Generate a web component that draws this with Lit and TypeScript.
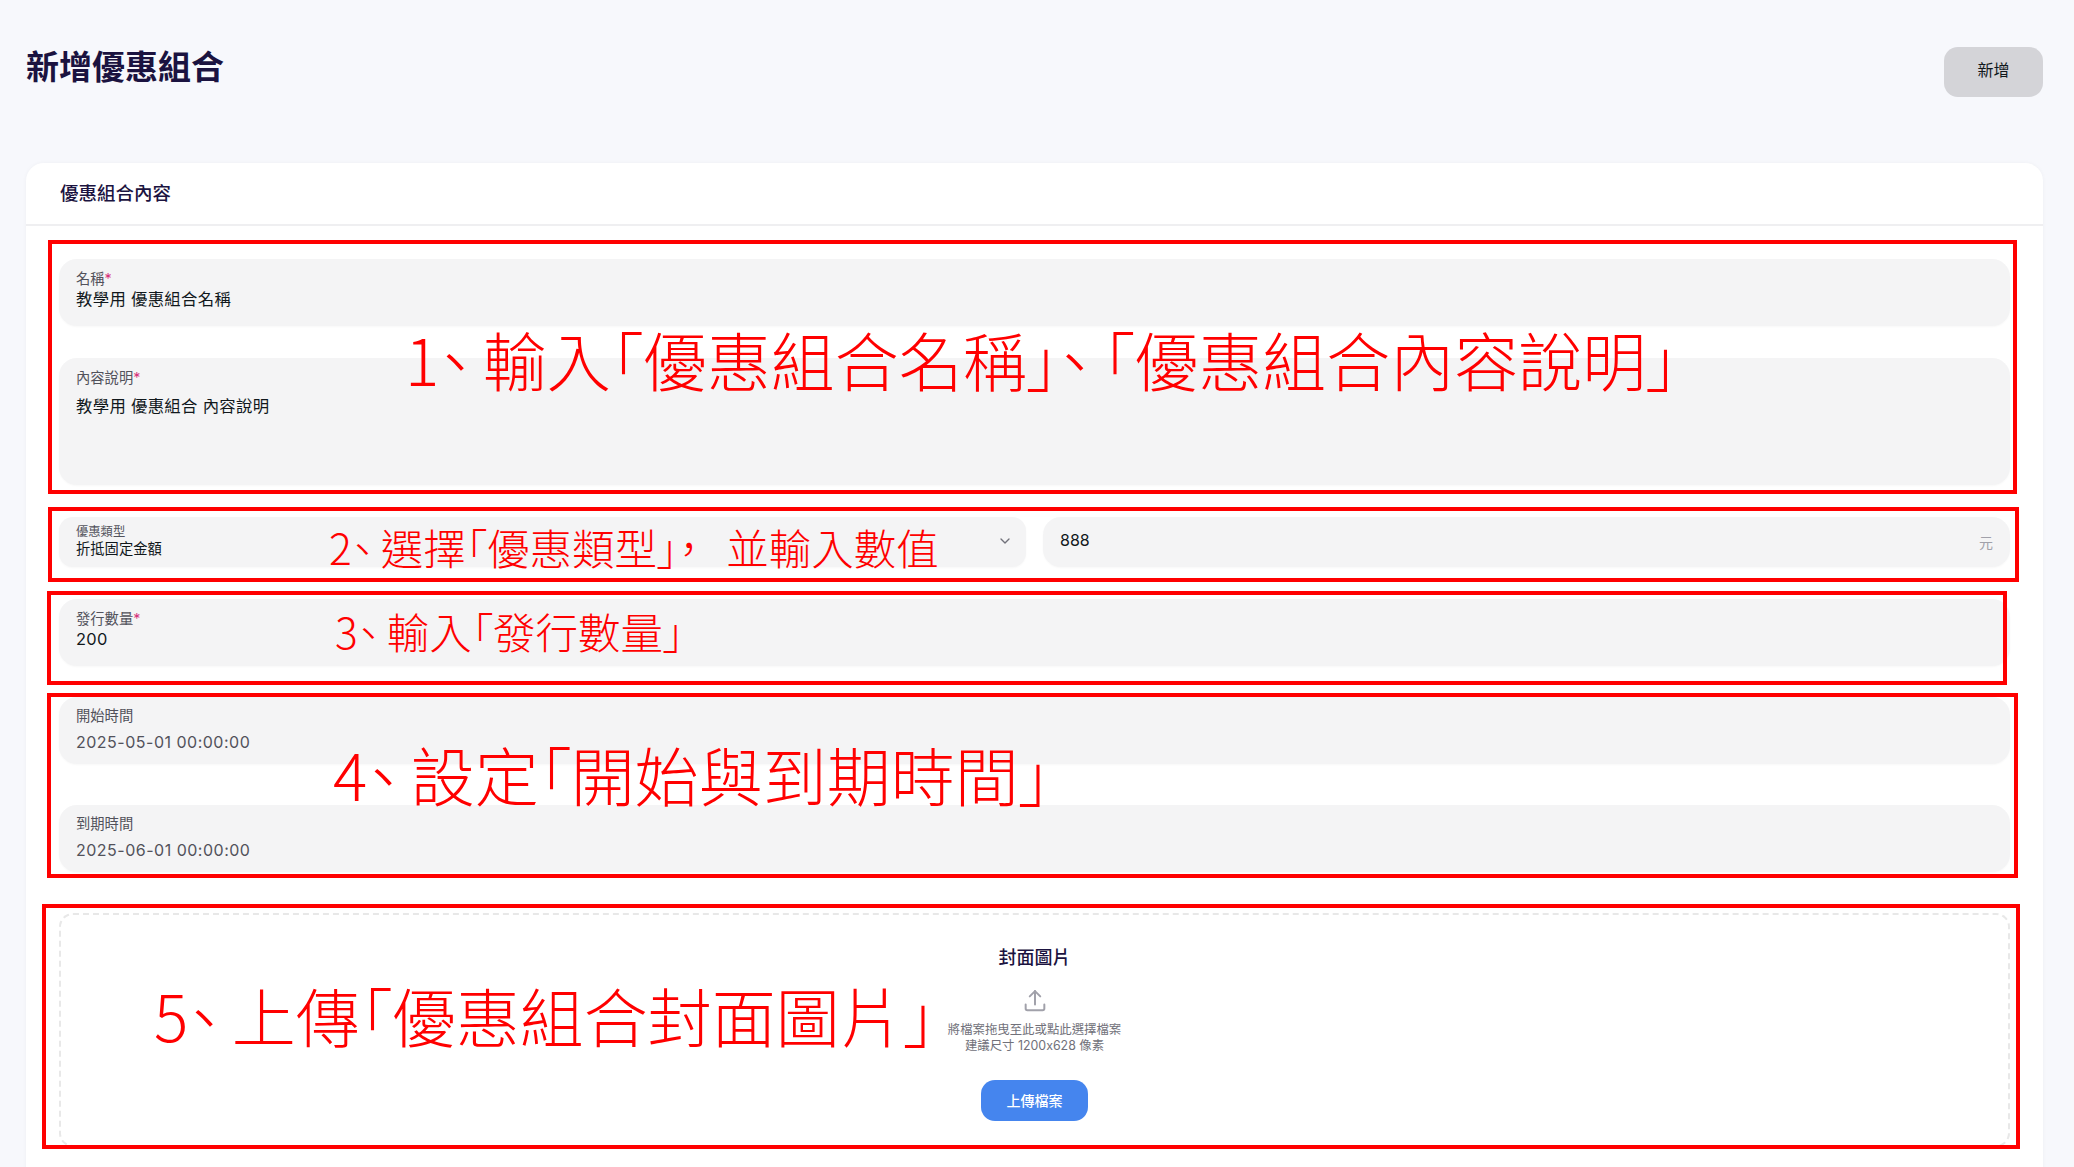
import { LitElement, html, css } from 'lit'
import { customElement } from 'lit/decorators.js'

const chevron = html`<svg class="chevron" width="16" height="16" viewBox="0 0 24 24" fill="none" stroke="currentColor" stroke-width="2" stroke-linecap="round" stroke-linejoin="round"><path d="M6 9l6 6 6-6"/></svg>`
const uploadIcon = html`<svg class="upload-icon" width="28" height="28" viewBox="0 0 24 24" fill="none" stroke="currentColor" stroke-width="1.7" stroke-linecap="round" stroke-linejoin="round"><path d="M4 15v3.5A1.5 1.5 0 0 0 5.5 20h13a1.5 1.5 0 0 0 1.500-1.500V15"/><path d="M12 15V3.500"/><path d="M7.500 8L12 3.500 16.500 8"/></svg>`
const dun = html`<span class="dun">、</span>`

@customElement('app-root')
export class AppRoot extends LitElement {
  static styles = css`
    :host {
      display: block;
      position: relative;
      height: 1167px;
      overflow: hidden;
      background: #f7f8fc;
      font-family: Inter, "Noto Sans CJK TC", sans-serif;
      color: #11181c;
    }
    .page {
      padding: 47px 31px 0 26px;
    }
    .top {
      display: flex;
      justify-content: space-between;
      align-items: flex-start;
      height: 116px;
    }
    h1 {
      margin: 0;
      font-size: 33px;
      line-height: 40px;
      font-weight: 700;
      color: #1b1340;
    }
    .add {
      width: 99px;
      height: 50px;
      padding: 0 0 6px;
      border: none;
      border-radius: 14px;
      background: #d4d4d8;
      color: #11181c;
      font: inherit;
      font-size: 16px;
      font-weight: 400;
    }
    .card {
      height: 1100px;
      border-radius: 18px 18px 0 0;
      background: #fff;
      box-shadow: 0 0 4px rgba(0, 0, 0, 0.04);
    }
    .card-head {
      height: 63px;
      box-sizing: border-box;
      padding: 17px 34px 0;
      border-bottom: 2px solid #efeff1;
      font-size: 18.5px;
      line-height: 26px;
      font-weight: 500;
      color: #1b1340;
    }
    .form {
      padding: 33px 33px 0;
      display: flex;
      flex-direction: column;
    }
    .field {
      box-sizing: border-box;
      height: 67px;
      padding: 10px 17px 0;
      border-radius: 18px;
      background: #f4f4f5;
      box-shadow: 0 1px 2px rgba(0, 0, 0, 0.03);
      flex: none;
    }
    .gap32 { margin-top: 32px; }
    .gap31 { margin-top: 31px; }
    .gap41 { margin-top: 41px; }
    .label {
      display: block;
      font-size: 14.3px;
      line-height: 20px;
      color: #52525b;
    }
    .label i {
      color: #d6337c;
      font-style: normal;
    }
    .value {
      display: block;
      font-size: 16.4px;
      line-height: 20px;
      letter-spacing: 0.3px;
    }
    .textarea {
      height: 127px;
    }
    .textarea .value {
      margin-top: 8px;
    }
    .date {
      padding-top: 9px;
    }
    .date .value {
      margin-top: 6px;
      color: #52525b;
      font-size: 16px;
      letter-spacing: 0.5px;
    }
    .row {
      display: grid;
      grid-template-columns: 967px 1fr;
      column-gap: 17px;
      margin-top: 32px;
    }
    .select {
      height: 50px;
      padding: 7px 17px 0;
      border-radius: 14px;
      display: flex;
      justify-content: space-between;
      align-items: flex-start;
    }
    .select .label {
      font-size: 12.3px;
      line-height: 16px;
    }
    .select .value {
      margin-top: -1px;
      font-size: 14.3px;
      line-height: 20px;
      letter-spacing: 0;
    }
    .chevron {
      color: #71717a;
      margin: 9px -4px 0 0;
    }
    .amount {
      height: 50px;
      padding: 0 17px;
      display: flex;
      justify-content: space-between;
      align-items: center;
    }
    .amount .value {
      margin-top: -5px;
      font-size: 16px;
      letter-spacing: 0;
    }
    .unit {
      font-size: 14px;
      color: #a1a1aa;
    }
    .drop {
      box-sizing: border-box;
      height: 234px;
      margin-top: 41px;
      padding-top: 30px;
      border: 2px dashed #e8e8e8;
      border-radius: 14px;
      display: flex;
      flex-direction: column;
      align-items: center;
      flex: none;
    }
    .drop-title {
      font-size: 18px;
      line-height: 26px;
      font-weight: 500;
      color: #1b1340;
    }
    .upload-icon {
      margin-top: 16px;
      color: #a1a1aa;
    }
    .hint {
      margin-top: 7px;
      font-size: 12.4px;
      line-height: 16px;
      color: #71717a;
      text-align: center;
    }
    .upload-btn {
      width: 107px;
      height: 41px;
      margin-top: 26px;
      padding: 0 0 2px;
      border: none;
      border-radius: 14px;
      background: #4585ee;
      color: #fff;
      font: inherit;
      font-size: 14px;
      font-weight: 500;
    }

    /* annotations drawn over the screenshot */
    .box {
      position: absolute;
      box-sizing: border-box;
      border: 4px solid #ff0000;
    }
    .b1 { left: 48px; top: 240px; width: 1969px; height: 254px; }
    .b2 { left: 48px; top: 507px; width: 1971px; height: 75px; }
    .b3 { left: 47px; top: 591px; width: 1960px; height: 94px; }
    .b4 { left: 47px; top: 693px; width: 1971px; height: 185px; }
    .b5 { left: 42px; top: 904px; width: 1978px; height: 245px; }
    .note {
      position: absolute;
      white-space: nowrap;
      color: #ff0000;
      font-family: "Noto Sans CJK TC", sans-serif;
      font-weight: 300;
      font-feature-settings: "palt";
      line-height: 1;
    }
    .dun { letter-spacing: 0.18em; }
    .comma { letter-spacing: 0.63em; }
    .big { font-size: 64px; }
    .small { font-size: 42.5px; }
    .n1 { left: 405px; top: 326px; }
    .n2 { left: 329px; top: 526px; }
    .n3 { left: 335px; top: 610px; }
    .n4 { left: 333px; top: 741px; }
    .n5 { left: 154px; top: 982px; }
  `

  field(label: string, value: string, cls = '', req = true) {
    return html`<div class="field ${cls}">
      <span class="label">${label}${req ? html`<i>*</i>` : ''}</span>
      <span class="value">${value}</span>
    </div>`
  }

  render() {
    return html`
      <div class="page">
        <div class="top">
          <h1>新增優惠組合</h1>
          <button class="add">新增</button>
        </div>
        <div class="card">
          <div class="card-head">優惠組合內容</div>
          <div class="form">
            ${this.field('名稱', '教學用 優惠組合名稱')}
            ${this.field('內容說明', '教學用 優惠組合 內容說明', 'textarea gap32')}
            <div class="row">
              <div class="field select">
                <div>
                  <span class="label">優惠類型</span>
                  <span class="value">折抵固定金額</span>
                </div>
                ${chevron}
              </div>
              <div class="field amount">
                <span class="value">888</span>
                <span class="unit">元</span>
              </div>
            </div>
            ${this.field('發行數量', '200', 'gap32')}
            ${this.field('開始時間', '2025-05-01 00:00:00', 'date gap31', false)}
            ${this.field('到期時間', '2025-06-01 00:00:00', 'date gap41', false)}
            <div class="drop">
              <div class="drop-title">封面圖片</div>
              ${uploadIcon}
              <div class="hint">將檔案拖曳至此或點此選擇檔案<br />建議尺寸 1200x628 像素</div>
              <button class="upload-btn">上傳檔案</button>
            </div>
          </div>
        </div>
      </div>
      <div class="box b1"></div>
      <div class="box b2"></div>
      <div class="box b3"></div>
      <div class="box b4"></div>
      <div class="box b5"></div>
      <div class="note big n1">1${dun}輸入「優惠組合名稱」${dun}「優惠組合內容說明」</div>
      <div class="note small n2">2${dun}選擇「優惠類型」<span class="comma">，</span>並輸入數值</div>
      <div class="note small n3">3${dun}輸入「發行數量」</div>
      <div class="note big n4">4${dun}設定「開始與到期時間」</div>
      <div class="note big n5">5${dun}上傳「優惠組合封面圖片」</div>
    `
  }
}
